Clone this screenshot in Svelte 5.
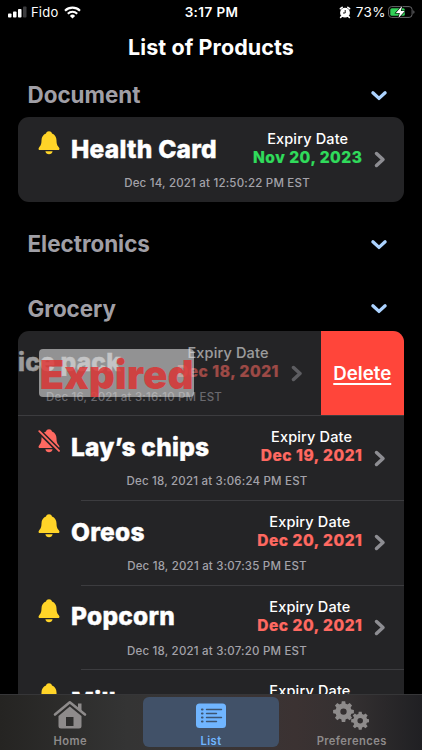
<script>
  const groups = [
    {
      name: 'Document',
      items: [
        { name: 'Health Card', expiry: 'Nov 20, 2023', added: 'Dec 14, 2021 at 12:50:22 PM EST', tone: 'good' }
      ]
    },
    { name: 'Electronics', items: [] },
    {
      name: 'Grocery',
      items: [
        { name: 'ice pack', expiry: 'Dec 18, 2021', added: 'Dec 16, 2021 at 3:16:10 PM EST', tone: 'bad', swiped: true },
        { name: 'Lay’s chips', expiry: 'Dec 19, 2021', added: 'Dec 18, 2021 at 3:06:24 PM EST', tone: 'bad', muted: true },
        { name: 'Oreos', expiry: 'Dec 20, 2021', added: 'Dec 18, 2021 at 3:07:35 PM EST', tone: 'bad' },
        { name: 'Popcorn', expiry: 'Dec 20, 2021', added: 'Dec 18, 2021 at 3:07:20 PM EST', tone: 'bad' },
        { name: 'Milk', tone: 'bad' }
      ]
    }
  ]

  const teeth = [0, 45, 90, 135, 180, 225, 270, 315]
</script>

{#snippet bell(muted)}
  <svg class="bell" class:muted viewBox="0 0 22 24" width="22" height="24">
    <path d="M11 .3c-1.500 0-2.600.8-3 2.100C5 3.600 3.600 6 3.500 9.300c-.1 4-.7 5.100-2.300 6.900-1.200 1.400-.7 2.900.8 2.900h18c1.500 0 2-1.500.8-2.900-1.600-1.800-2.200-2.900-2.300-6.900C18.400 6 17 3.600 14 2.400 13.600 1.100 12.500.3 11 .3z" />
    <path d="M7.400 20.300h7.200c-.3 1.800-1.700 2.900-3.600 2.900s-3.300-1.100-3.600-2.900z" />
    {#if muted}
      <path class="gap" d="M.5 1.500 21.500 22.500" />
      <path class="slash" d="M1.300 2.200 21 21.900" />
    {/if}
  </svg>
{/snippet}

{#snippet gear(x, y, scale)}
  <g transform="translate({x} {y}) scale({scale})">
    <circle r="5.700" fill="none" stroke="currentColor" stroke-width="5" />
    {#each teeth as angle}
      <path transform="rotate({angle})" d="M-2.300-7-1.700-10.500H1.700L2.300-7z" fill="currentColor" />
    {/each}
  </g>
{/snippet}

<div class="screen">
  <div class="content">
    <div class="status">
      <div class="status-left">
        <svg width="19" height="12" viewBox="0 0 19 12" fill="#fff">
          <rect x="0" y="7.500" width="3.500" height="4" rx=".8" />
          <rect x="5" y="5.500" width="3.500" height="6" rx=".8" />
          <rect x="10" y="3" width="3.500" height="8.500" rx=".8" />
          <rect x="15" y=".5" width="3.500" height="11" rx=".8" fill="#3c3c3e" />
        </svg>
        <span class="carrier">Fido</span>
        <svg width="17" height="13" viewBox="0 0 17 13" fill="none" stroke="#fff" stroke-width="2.100">
          <path d="M1 4.700a10.800 10.800 0 0 1 15 0" />
          <path d="M3.800 7.700a6.800 6.800 0 0 1 9.400 0" />
          <path d="M8.500 12.500 5.900 9.900a3.700 3.700 0 0 1 5.200 0z" fill="#fff" stroke="none" />
        </svg>
      </div>
      <span class="clock">3:17 PM</span>
      <div class="status-right">
        <svg width="12" height="13" viewBox="0 0 12 13">
          <circle cx="6" cy="6.700" r="4.900" fill="#fff" />
          <path d="M1.400 2.700 3.200 1.300M10.600 2.700 8.800 1.300M2.400 10.500l-.8 1M9.600 10.500l.8 1" stroke="#fff" stroke-width="1.600" stroke-linecap="round" />
          <path d="M6.200 4v3H4" fill="none" stroke="#000" stroke-width=".9" />
        </svg>
        <span class="percent">73%</span>
        <svg class="battery" width="27" height="14" viewBox="0 0 27 14">
          <rect x=".6" y="1.600" width="23.500" height="10.800" rx="3" fill="none" stroke="#67676a" />
          <rect x="2.300" y="3.200" width="14.500" height="7.600" rx="1.500" fill="#32d158" />
          <path d="M25.300 5.200v3.600c1.600-.5 1.600-3.100 0-3.600z" fill="#67676a" />
          <path d="M14.300.8 7.800 8h4L10.300 13.200 16.800 6h-4z" fill="#fff" stroke="#000" stroke-width="1.200" paint-order="stroke" />
        </svg>
      </div>
    </div>

    <h1>List of Products</h1>

    {#each groups as group}
      <section>
        <header>
          <h2>{group.name}</h2>
          <svg width="18" height="12" viewBox="0 0 18 12">
            <path d="M2.900 3.800 9 9.400l6.100-5.600" fill="none" stroke="#acd3ff" stroke-width="3.300" stroke-linecap="round" stroke-linejoin="round" />
          </svg>
        </header>

        {#if group.items.length > 0}
          <div class="card">
            {#each group.items as item}
              <div class="row" class:swiped={item.swiped}>
                <div class="body">
                  <div class="top">
                    {#if !item.swiped}
                      {@render bell(item.muted)}
                    {/if}
                    <span class="name">{item.name}</span>
                    <div class="expiry" class:pending={!item.expiry}>
                      <span class="label">Expiry Date</span>
                      {#if item.expiry}
                        <span class="date {item.tone}">{item.expiry}</span>
                      {/if}
                    </div>
                  </div>
                  {#if item.added}
                    <div class="added">{item.added}</div>
                  {/if}
                  <svg class="chevron" width="14" height="18" viewBox="0 0 14 18">
                    <path d="M3.500 3.500 10 9.500 3.500 15.500" fill="none" stroke="#8d8d92" stroke-width="3.500" stroke-linecap="round" stroke-linejoin="round" />
                  </svg>
                  {#if item.swiped}
                    <span class="stamp">Expired</span>
                  {/if}
                </div>
                {#if item.swiped}
                  <button>Delete</button>
                {/if}
              </div>
            {/each}
          </div>
        {/if}
      </section>
    {/each}
  </div>

  <nav>
    <div class="tab">
      <svg width="34" height="30" viewBox="0 0 34 30" fill="currentColor">
        <path d="M2 14.500 16.800 2.300 32 14.500" fill="none" stroke="currentColor" stroke-width="2.600" stroke-linecap="round" stroke-linejoin="round" />
        <path d="M25 3.500h3.500v9L25 9.500z" />
        <path fill-rule="evenodd" d="M16.800 6.600 28.500 16v10a2.500 2.500 0 0 1-2.500 2.500H8A2.500 2.500 0 0 1 5.500 26V16zM13 17v9h7.500v-9z" />
      </svg>
      <span>Home</span>
    </div>
    <div class="tab active">
      <svg width="34" height="30" viewBox="0 0 34 30">
        <rect x="2" y="3.500" width="30" height="24.500" rx="3.500" fill="currentColor" />
        <g stroke="#3d5571" stroke-width="1.400" stroke-linecap="round">
          <path d="M12.500 9.500h15M12.500 13.500h10M12.500 17.500h15M12.500 21.500h10" />
          <path d="M8 9.500h.5M8 13.500h.5M8 17.500h.5M8 21.500h.5" stroke-width="2.200" />
        </g>
      </svg>
      <span>List</span>
    </div>
    <div class="tab">
      <svg class="gears" width="38" height="30" viewBox="0 0 38 30">
        {@render gear(12.5, 11.6, 0.99)}
        {@render gear(29.2, 20.8, 0.86)}
      </svg>
      <span>Preferences</span>
    </div>
  </nav>
</div>

<style>
  :global(body) {
    background: #000;
  }

  .screen {
    display: flex;
    flex-direction: column;
    width: 422px;
    height: 750px;
    overflow: hidden;
    background: #000;
    color: #fff;
    font-family: Inter, 'Liberation Sans', sans-serif;
  }

  .content {
    flex: 1;
    min-height: 0;
    overflow: hidden;
  }

  .status {
    display: grid;
    grid-template-columns: 1fr auto 1fr;
    align-items: center;
    height: 24px;
    padding: 0 7px 0 8px;
    font-size: 13px;
  }

  .status-left,
  .status-right {
    display: flex;
    align-items: center;
  }

  .status-right {
    justify-content: flex-end;
  }

  .carrier {
    margin: 0 6px 0 4px;
    letter-spacing: 0.2px;
  }

  .clock {
    font-weight: 600;
    font-size: 13.500px;
    letter-spacing: 0.4px;
  }

  .percent {
    margin: 0 2px 0 5px;
    font-size: 13.500px;
    letter-spacing: 0.4px;
  }

  h1 {
    height: 49px;
    margin: 0;
    font-size: 21.500px;
    font-weight: 700;
    line-height: 46px;
    letter-spacing: 0.08px;
    text-align: center;
  }

  section {
    margin: 0 18px 20.500px;
  }

  header {
    display: flex;
    align-items: center;
    justify-content: space-between;
    height: 44px;
    padding: 0 16px 1px 9.500px;
    box-sizing: border-box;
  }

  h2 {
    margin: 0;
    font-size: 22.400px;
    font-weight: 700;
    color: #a09fa6;
  }

  .card {
    overflow: hidden;
    border-radius: 11px;
    background: #242426;
  }

  .row {
    position: relative;
    height: 84.700px;

    & + &::before {
      content: '';
      position: absolute;
      top: 0;
      right: 0;
      left: 63px;
      height: 1px;
      background: #3c3c3f;
    }
  }

  .row.swiped + .row::before {
    left: 0;
  }

  .body {
    display: grid;
    grid-template-columns: 1fr 14px;
    grid-template-rows: 57px 1fr;
    height: 100%;
    padding: 0 17px 0 19.500px;
    box-sizing: border-box;
  }

  .top {
    display: flex;
    align-items: flex-start;
    padding-right: 10.500px;
  }

  .bell {
    flex: none;
    margin-top: 14px;
    fill: #ffd428;
  }

  .muted {
    fill: #ff6961;
  }

  .gap,
  .slash {
    fill: none;
    stroke: #242426;
    stroke-width: 5;
  }

  .slash {
    stroke: #ff6961;
    stroke-width: 1.900;
    stroke-linecap: round;
  }

  .name {
    margin: 16.500px 0 0 11.500px;
    font-size: 24.500px;
    font-weight: 800;
    line-height: 30px;
    letter-spacing: 0.25px;
    white-space: nowrap;
    -webkit-text-stroke: 0.4px currentColor;
  }

  .expiry {
    display: flex;
    flex-direction: column;
    align-items: center;
    margin: 12px 0 0 auto;
    white-space: nowrap;
  }

  .pending {
    padding-right: 12px;
  }

  .label {
    font-size: 14.500px;
    font-weight: 500;
    line-height: 20px;
    letter-spacing: 0.15px;
  }

  .date {
    font-size: 15.500px;
    font-weight: 800;
    line-height: 18px;
    letter-spacing: 0.54px;
    -webkit-text-stroke: 0.2px currentColor;
  }

  .good {
    color: #30db5b;
  }

  .bad {
    color: #ff6961;
  }

  .added {
    grid-row: 2;
    grid-column: 1 / 3;
    padding: 1px 0 0 9.500px;
    font-size: 11.500px;
    font-weight: 500;
    line-height: 16px;
    letter-spacing: 0.2px;
    text-align: center;
    color: #a3a2a9;
  }

  .chevron {
    grid-row: 1 / 3;
    grid-column: 2;
    align-self: center;
  }

  .swiped {
    display: flex;

    .body {
      position: relative;
      flex: none;
      width: 302.500px;
      padding-left: 0;
    }

    .name {
      margin-left: 0;
    }

    .top,
    .added,
    .chevron {
      opacity: 0.55;
    }

    .added {
      padding-right: 63px;
    }

    button {
      flex: 1;
      padding: 0;
      border: 0;
      background: #ff453a;
      color: #fff;
      font: 600 18.700px Inter, sans-serif;
      text-decoration: underline;
      text-decoration-thickness: 1.500px;
      text-underline-offset: 3px;
    }
  }

  .stamp {
    position: absolute;
    top: 18.500px;
    left: 21px;
    width: 155px;
    height: 48px;
    border-radius: 4px;
    background: rgba(225, 225, 225, 0.58);
    color: rgba(224, 44, 44, 0.78);
    font-size: 40.300px;
    font-weight: 900;
    line-height: 52px;
    text-align: center;
  }

  nav {
    display: flex;
    gap: 4px;
    height: 56px;
    padding: 2px 2px 3px;
    box-sizing: border-box;
    border-top: 1px solid #363638;
    background: linear-gradient(90deg, #252422, #343434 30%, #393536 52%, #3b3232 70%, #343031 83%, #202023);
  }

  .tab {
    display: flex;
    flex: 1;
    flex-direction: column;
    align-items: center;
    gap: 4px;
    padding-top: 3px;
    border-radius: 6px;
    color: #8e8b8b;
    font-size: 11.200px;
    font-weight: 600;
    line-height: 14px;
    letter-spacing: 0.4px;

    svg {
      flex: none;
    }

    .gears {
      margin-right: 4px;
    }
  }

  .active {
    background: #415168;
    color: #70b5ff;
  }
</style>
